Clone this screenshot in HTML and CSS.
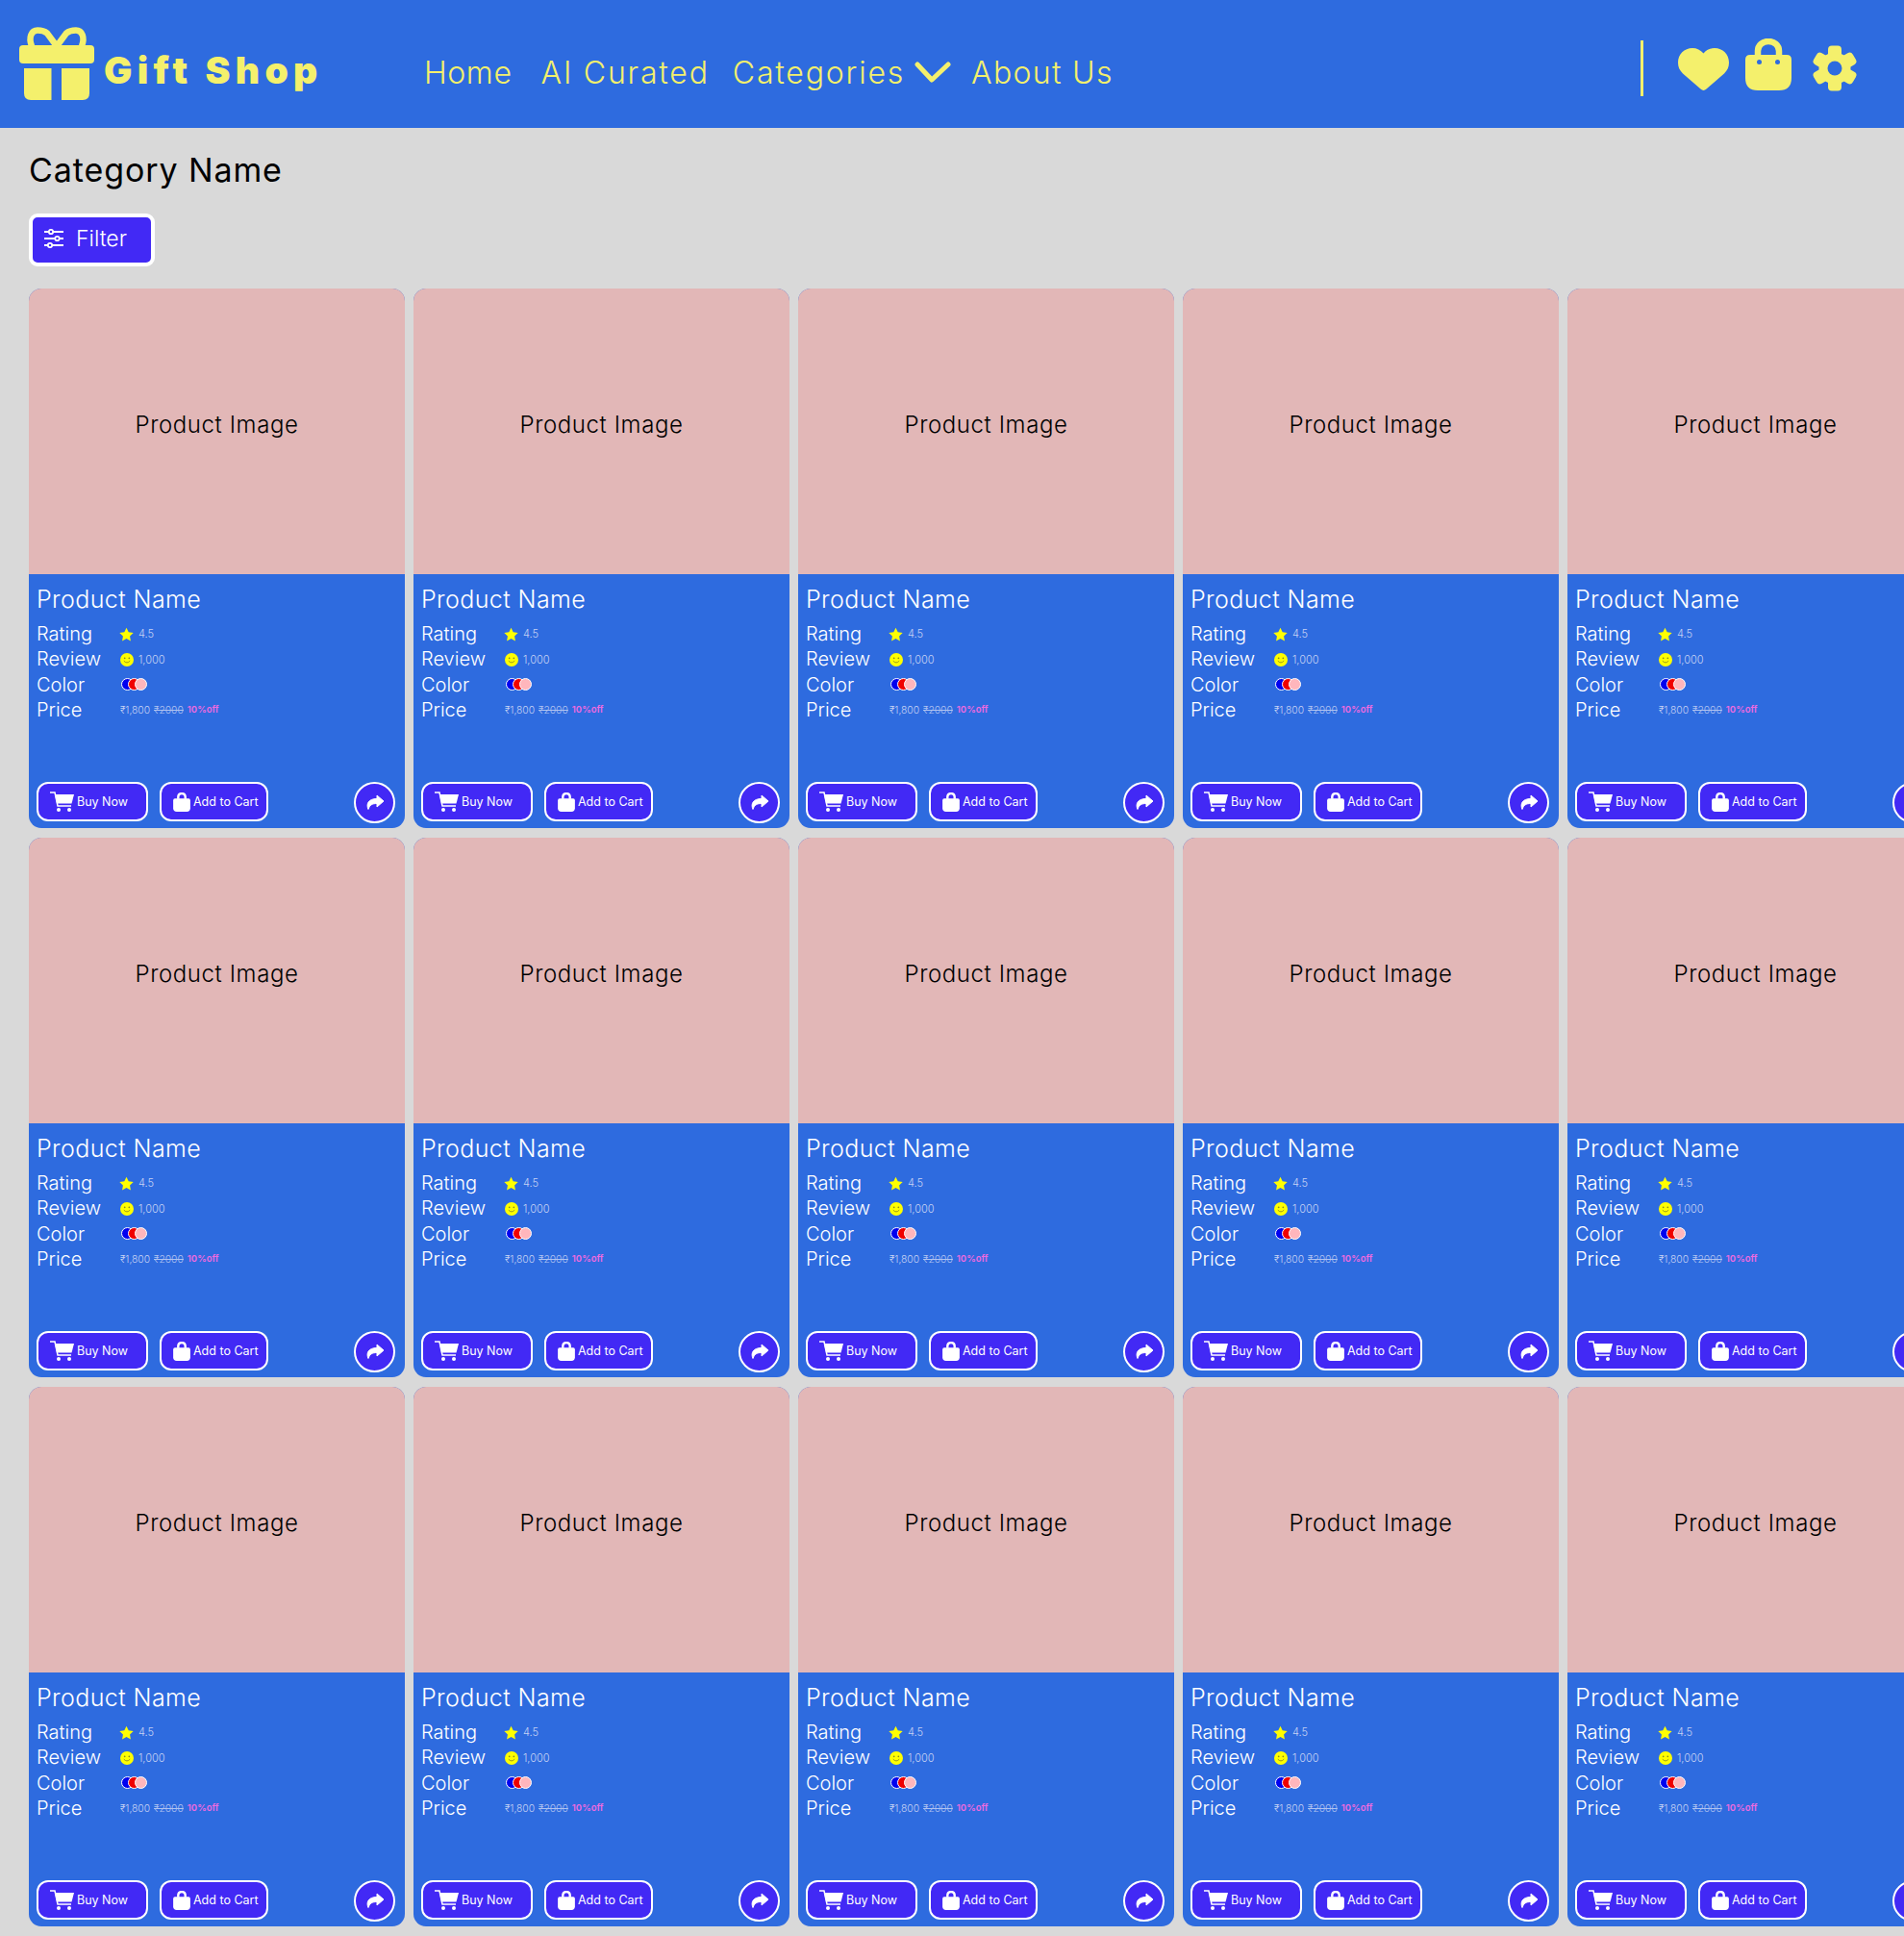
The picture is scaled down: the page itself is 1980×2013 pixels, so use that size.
FILE: index.html
```html
<!DOCTYPE html>
<html lang="en">
<head>
    <meta charset="UTF-8">
    <meta name="viewport" content="width=device-width, initial-scale=1.0">
    <title>Gift Shop</title>
    <link rel="stylesheet" href="styles.css">
</head>
<body>
    <!-- Header -->
    <header class="header">
        <div class="logo">
            <svg class="logo-icon" viewBox="0 0 78 76">
                <path class="bow" d="M39 20 29 6.500C26 4 23 3.500 19 3.500 12.500 3.500 9.500 11 13 20M39 20 49 6.500C52 4 55 3.500 59 3.500 65.500 3.500 68.500 11 65 20"/>
                <rect x="0" y="19" width="78" height="19" rx="4"/>
                <path d="M5 43H33.500V76H12Q5 76 5 69ZM44 43H73V69Q73 76 66 76H44Z"/>
            </svg>
            <span class="logo-text">Gift Shop</span>
        </div>
        <nav class="nav">
            <a class="nav-link nav-home">Home</a>
            <a class="nav-link">AI Curated</a>
            <a class="nav-link nav-drop">Categories
                <svg class="chevron" viewBox="0 0 38 22"><path d="M3 3 18 19 35 3"/></svg>
            </a>
            <a class="nav-link">About Us</a>
        </nav>
        <div class="header-tools">
            <span class="divider"></span>
            <svg class="tool-heart" viewBox="0 0 53 44"><path d="M26.500 44C25.500 44 24.500 43.500 23.500 42.600L5 26.500C1.500 23 0 19.500 0 15 0 6.500 6.500 0 15 0 19.500 0 23.500 2 26.500 5.500 29.500 2 33.500 0 38 0 46.500 0 53 6.500 53 15 53 19.500 51.500 23 48 26.500L29.500 42.600C28.500 43.500 27.500 44 26.500 44Z"/></svg>
            <svg class="tool-bag" viewBox="0 0 48 54">
                <path class="bow" d="M13 18V13C13 7 18 3 24 3 30 3 35 7 35 13V18"/>
                <path d="M5 17H43Q48 17 48 22V41Q48 54 35 54H13Q0 54 0 41V22Q0 17 5 17Z"/>
                <circle class="hole" cx="14.500" cy="24.500" r="2.500"/>
                <circle class="hole" cx="33.500" cy="24.500" r="2.500"/>
            </svg>
            <svg class="tool-gear" viewBox="-24 -24 48 48">
                <circle r="16.500"/>
                <rect x="-7" y="-23.500" width="14" height="47" rx="4"/>
                <rect x="-7" y="-23.500" width="14" height="47" rx="4" transform="rotate(60)"/>
                <rect x="-7" y="-23.500" width="14" height="47" rx="4" transform="rotate(120)"/>
                <circle class="hole" r="7.500"/>
            </svg>
        </div>
    </header>

    <main class="content">
        <h1 class="page-title">Category Name</h1>
        <button class="filter-btn">
            <svg class="filter-icon" viewBox="0 0 20 20">
                <path d="M0 3H20M0 10H20M0 17H20"/>
                <circle cx="7" cy="3" r="2.200"/>
                <circle cx="13.500" cy="10" r="2.200"/>
                <circle cx="6" cy="17" r="2.200"/>
            </svg>
            Filter
        </button>
        <div id="productGrid" class="product-grid"></div>
    </main>

    <!-- Card do produto -->
    <template id="cardTemplate">
        <article class="card">
            <div class="card-image">Product Image</div>
            <div class="card-body">
                <h2 class="card-name">Product Name</h2>
                <dl class="specs">
                    <dt>Rating</dt>
                    <dd>
                        <svg class="star" viewBox="0 0 24 24"><path d="M12 1 15.500 8.300 23.500 9.400 17.700 15 19.100 23 12 19.200 4.900 23 6.300 15 .5 9.400 8.500 8.300Z"/></svg>
                        <span>4.5</span>
                    </dd>
                    <dt>Review</dt>
                    <dd>
                        <svg class="smile" viewBox="0 0 24 24">
                            <circle cx="12" cy="12" r="12"/>
                            <circle class="eye" cx="8" cy="9" r="1.500"/>
                            <circle class="eye" cx="16" cy="9" r="1.500"/>
                            <path d="M6.500 14Q12 20 17.500 14"/>
                        </svg>
                        <span>1,000</span>
                    </dd>
                    <dt>Color</dt>
                    <dd class="swatches">
                        <i class="swatch swatch-blue"></i><i class="swatch swatch-red"></i><i class="swatch swatch-pink"></i>
                    </dd>
                    <dt>Price</dt>
                    <dd class="prices">
                        <span>₹1,800</span> <s>₹2000</s> <b>10%off</b>
                    </dd>
                </dl>
                <div class="card-actions">
                    <button class="card-btn">
                        <svg class="cart-icon" viewBox="0 0 25 21">
                            <path class="cart-line" d="M0 1H5L8 15H22"/>
                            <path d="M5 3H25L22.500 12.500H7Z"/>
                            <circle cx="9" cy="19" r="2"/>
                            <circle cx="20" cy="19" r="2"/>
                        </svg>
                        Buy Now
                    </button>
                    <button class="card-btn">
                        <svg class="bag-icon" viewBox="0 0 48 54">
                            <path class="bow" d="M14 18V13C14 7 18 3 24 3 30 3 34 7 34 13V18"/>
                            <path d="M5 17H43Q48 17 48 22V44Q48 54 38 54H10Q0 54 0 44V22Q0 17 5 17Z"/>
                        </svg>
                        Add to Cart
                    </button>
                    <button class="share-btn">
                        <svg viewBox="0 0 20 17"><path d="M12 1 19 7 12 13V9.500C7 9.500 4.500 11 3 15.500 .5 10 3 4.500 12 4.500Z"/></svg>
                    </button>
                </div>
            </div>
        </article>
    </template>

    <script>
        const grid = document.getElementById('productGrid');
        const template = document.getElementById('cardTemplate');
        for (let i = 0; i < 15; i++) {
            grid.appendChild(template.content.cloneNode(true));
        }
    </script>
</body>
</html>
```

FILE: styles.css
```css
/* Geral */
* {
    box-sizing: border-box;
    margin: 0;
    padding: 0;
}

body {
    width: 1980px;
    height: 2013px;
    overflow: hidden;
    background-color: #d9d9d9;
    font-family: 'Inter', 'Open Sans', sans-serif;
    font-weight: 300;
}

/* Header */
.header {
    height: 133px;
    display: flex;
    align-items: flex-start;
    padding: 28px 48px 0 20px;
    background-color: #2e6bdf;
    color: #f4f06c;
    fill: #f4f06c;
}

.logo {
    display: flex;
    align-items: flex-start;
    gap: 10px;
    width: 421px;
}

.logo-icon {
    width: 78px;
    height: 76px;
}

.bow {
    fill: none;
    stroke: #f4f06c;
    stroke-width: 6.500;
}

.logo-text {
    margin-top: 20px;
    font-size: 39px;
    line-height: 50px;
    font-weight: 900;
    letter-spacing: 5.300px;
    white-space: nowrap;
}

.nav {
    display: flex;
    align-items: center;
    gap: 24px;
    height: 56px;
    margin-top: 19px;
    font-size: 32px;
    letter-spacing: 1.800px;
}

.nav-link {
    white-space: nowrap;
}

.nav-home {
    margin-right: 6px;
    letter-spacing: .6px;
}

.nav-drop {
    display: flex;
    align-items: center;
    gap: 10px;
    margin-right: -3px;
}

.nav-link:last-child {
    letter-spacing: 1.300px;
}

.chevron {
    width: 38px;
    height: 22px;
    fill: none;
    stroke: #f4f06c;
    stroke-width: 5;
    stroke-linecap: round;
    stroke-linejoin: round;
}

.header-tools {
    display: flex;
    align-items: flex-start;
    margin-left: auto;
    margin-top: 14px;
}

.divider {
    width: 3px;
    height: 58px;
    background-color: #f4f06c;
    margin-right: 36px;
}

.tool-heart {
    width: 53px;
    height: 44px;
    margin-top: 8px;
    margin-right: 17px;
}

.tool-bag {
    width: 48px;
    height: 54px;
    margin-top: -2px;
    margin-right: 21px;
}

.tool-gear {
    width: 48px;
    height: 48px;
    margin-top: 5px;
}

.hole {
    fill: #2e6bdf;
}

/* Conteudo */
.content {
    padding: 21px 0 0 30px;
}

.page-title {
    font-size: 34px;
    line-height: 46px;
    font-weight: 400;
    letter-spacing: .9px;
    color: #000;
}

.filter-btn {
    display: flex;
    align-items: center;
    gap: 13px;
    width: 131px;
    height: 55px;
    margin-top: 22px;
    padding: 0 0 4px 12px;
    background-color: #4229f5;
    border: 4px solid #fff;
    border-radius: 9px;
    color: #fff;
    font-family: inherit;
    font-size: 23px;
    font-weight: 300;
}

.filter-icon {
    width: 20px;
    height: 20px;
    fill: #4229f5;
    stroke: #fff;
    stroke-width: 1.800;
}

/* Grid de produtos */
.product-grid {
    display: grid;
    grid-template-columns: repeat(5, 391px);
    grid-auto-rows: 561px;
    gap: 10px 9px;
    margin-top: 23px;
}

.card {
    display: flex;
    flex-direction: column;
    border-radius: 13px;
    overflow: hidden;
    background-color: #2e6bdf;
}

.card-image {
    height: 297px;
    display: flex;
    align-items: center;
    justify-content: center;
    padding-bottom: 14px;
    background-color: #e2b7b7;
    color: #000;
    font-size: 24px;
    letter-spacing: .6px;
}

.card-body {
    flex: 1;
    display: flex;
    flex-direction: column;
    padding: 10px 10px 5px 8px;
    color: #fff;
}

.card-name {
    font-size: 25px;
    line-height: 32px;
    font-weight: 300;
    letter-spacing: .4px;
}

.specs {
    display: grid;
    grid-template-columns: 87px 1fr;
    grid-auto-rows: 26.400px;
    margin-top: 7px;
    font-size: 20px;
    line-height: 26px;
}

.specs dd {
    display: flex;
    align-items: center;
    gap: 5px;
    font-size: 11px;
    color: #c6d2f4;
}

.star {
    width: 15px;
    height: 15px;
    margin-left: -1px;
    fill: #ffff00;
}

.smile {
    width: 14px;
    height: 14px;
    fill: #ffff00;
    stroke: none;
}

.smile path {
    fill: none;
    stroke: #8a8a20;
    stroke-width: 1.500;
}

.eye {
    fill: #8a8a20;
}

.swatches {
    padding-left: 1px;
}

.swatches.swatches {
    gap: 0;
}

.swatch {
    width: 13px;
    height: 13px;
    border: 1px solid #fff;
    border-radius: 50%;
    margin-right: -6px;
}

.swatch-blue {
    background-color: #0000f0;
}

.swatch-red {
    background-color: #f00000;
}

.swatch-pink {
    background-color: #ffb6bc;
}

.specs .prices {
    gap: 4px;
    font-size: 10.300px;
}

.prices s {
    opacity: .85;
}

.prices b {
    font-weight: 600;
    font-size: 9.500px;
    color: #f06ae0;
}

.card-actions {
    display: flex;
    align-items: flex-start;
    gap: 12px;
    margin-top: auto;
}

.card-btn {
    display: flex;
    align-items: center;
    height: 41px;
    gap: 3px;
    background-color: #4229f5;
    border: 2px solid #fff;
    border-radius: 12px;
    color: #fff;
    font-family: inherit;
    font-size: 12.500px;
    font-weight: 400;
    fill: #fff;
    white-space: nowrap;
}

.card-btn:nth-child(1) {
    width: 116px;
    padding-left: 12px;
}

.card-btn:nth-child(2) {
    width: 113px;
    padding-left: 12px;
}

.cart-icon {
    width: 25px;
    height: 21px;
}

.cart-line {
    fill: none;
    stroke: #fff;
    stroke-width: 1.500;
}

.bag-icon {
    width: 18px;
    height: 20px;
}

.bag-icon .bow {
    stroke: #fff;
}

.share-btn {
    width: 43px;
    height: 43px;
    margin-left: auto;
    display: flex;
    align-items: center;
    justify-content: center;
    background-color: #4229f5;
    border: 2px solid #fff;
    border-radius: 50%;
    fill: #fff;
    stroke: #fff;
    stroke-linejoin: round;
}

.share-btn svg {
    width: 20px;
    height: 17px;
}
```
